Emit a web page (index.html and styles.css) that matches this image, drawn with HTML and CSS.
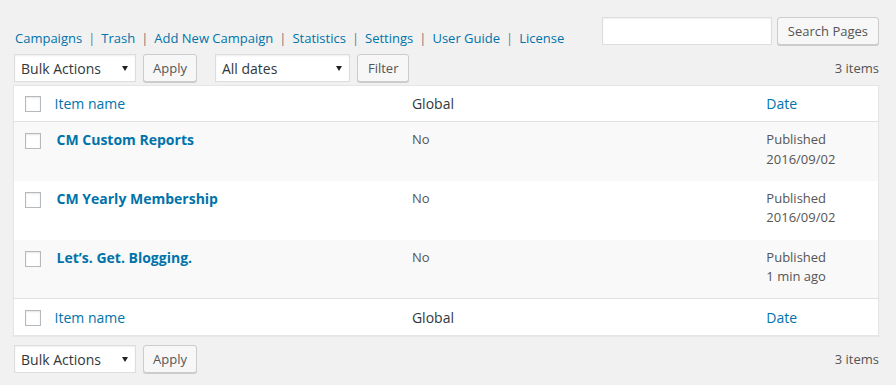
FILE: index.html
```html
<!DOCTYPE html>
<html lang="en">
<head>
    <meta charset="UTF-8">
    <title>Campaigns</title>
    <meta name="viewport" content="width=device-width, initial-scale=1.0">
    <link rel="stylesheet" href="styles.css">
</head>
<body>
<div class="wrap">
    <!-- Sub navigation + search -->
    <div class="top-bar">
        <ul class="subnav">
            <li><a href="#">Campaigns</a><span class="sep">|</span></li>
            <li><a href="#">Trash</a><span class="sep">|</span></li>
            <li><a href="#">Add New Campaign</a><span class="sep">|</span></li>
            <li><a href="#">Statistics</a><span class="sep">|</span></li>
            <li><a href="#">Settings</a><span class="sep">|</span></li>
            <li><a href="#">User Guide</a><span class="sep">|</span></li>
            <li><a href="#">License</a></li>
        </ul>
        <form class="search-box">
            <input type="search" class="search-input">
            <button type="button" class="button button-search">Search Pages</button>
        </form>
    </div>

    <!-- Top table navigation -->
    <div class="tablenav">
        <div class="actions">
            <span class="select-wrap select-bulk">
                <select class="select"><option>Bulk Actions</option></select>
            </span>
            <button type="button" class="button">Apply</button>
        </div>
        <div class="actions">
            <span class="select-wrap select-dates">
                <select class="select"><option>All dates</option></select>
            </span>
            <button type="button" class="button button-filter">Filter</button>
        </div>
        <div class="count">3 items</div>
    </div>

    <table class="list-table">
        <colgroup>
            <col class="col-check">
            <col class="col-name">
            <col class="col-global">
            <col class="col-date">
        </colgroup>
        <thead>
            <tr>
                <th class="check-column"><input type="checkbox" class="cb"></th>
                <th><a href="#">Item name</a></th>
                <th>Global</th>
                <th><a href="#">Date</a></th>
            </tr>
        </thead>
        <tbody>
            <tr class="alt">
                <td class="check-column"><input type="checkbox" class="cb"></td>
                <td><a href="#" class="row-title">CM Custom Reports</a></td>
                <td>No</td>
                <td>Published<br>2016/09/02</td>
            </tr>
            <tr>
                <td class="check-column"><input type="checkbox" class="cb"></td>
                <td><a href="#" class="row-title">CM Yearly Membership</a></td>
                <td>No</td>
                <td>Published<br>2016/09/02</td>
            </tr>
            <tr class="alt">
                <td class="check-column"><input type="checkbox" class="cb"></td>
                <td><a href="#" class="row-title">Let’s. Get. Blogging.</a></td>
                <td>No</td>
                <td>Published<br><abbr title="2016/09/02">1 min ago</abbr></td>
            </tr>
        </tbody>
        <tfoot>
            <tr>
                <th class="check-column"><input type="checkbox" class="cb"></th>
                <th><a href="#">Item name</a></th>
                <th>Global</th>
                <th><a href="#">Date</a></th>
            </tr>
        </tfoot>
    </table>

    <!-- Bottom table navigation -->
    <div class="tablenav bottom">
        <div class="actions">
            <span class="select-wrap select-bulk">
                <select class="select"><option>Bulk Actions</option></select>
            </span>
            <button type="button" class="button">Apply</button>
        </div>
        <div class="count">3 items</div>
    </div>
</div>
</body>
</html>
```

FILE: styles.css
```css
/* Page base */
html, body {
    margin: 0;
    padding: 0;
}

body {
    background: #f1f1f1;
    color: #444;
    font-family: "Open Sans", "Liberation Sans", sans-serif;
    font-size: 13px;
    line-height: 1.4em;
}

a {
    color: #0073aa;
    text-decoration: none;
}

.wrap {
    padding: 17px 17px 0 13px;
}

/* Sub navigation + search */
.top-bar {
    display: flex;
    justify-content: space-between;
    align-items: flex-start;
    height: 28px;
}

.subnav {
    list-style: none;
    margin: 11px 0 0 2px;
    padding: 0;
    display: flex;
    line-height: 20px;
}

.subnav .sep {
    color: #777;
    margin: 0 6px 0 6px;
}

.search-box {
    display: flex;
    gap: 5px;
    margin: 0;
}

.search-input {
    box-sizing: border-box;
    width: 170px;
    height: 28px;
    margin: 0;
    border: 1px solid #ddd;
    background: #fff;
    box-shadow: inset 0 1px 2px rgba(0, 0, 0, 0.07);
    outline: none;
}

/* Buttons */
.button {
    box-sizing: border-box;
    height: 28px;
    margin: 0;
    padding: 0 9px 1px;
    font-family: inherit;
    font-size: 13px;
    line-height: 26px;
    color: #555;
    background: #f7f7f7;
    border: 1px solid #ccc;
    border-radius: 3px;
    box-shadow: 0 1px 0 #ccc;
    cursor: pointer;
}

.button-search {
    padding: 0 10px 1px;
}

.button-filter {
    padding: 0 10px 1px;
}

/* Table navigation */
.tablenav {
    display: flex;
    align-items: flex-start;
    height: 31px;
    margin-top: 9px;
}

.tablenav.bottom {
    margin-top: 9px;
}

.actions {
    display: flex;
    gap: 7px;
    margin: 0 18px 0 1px;
}

.actions + .actions {
    margin-left: 0;
}

.count {
    margin-left: auto;
    line-height: 28px;
    color: #555;
}

/* Selects with a drawn arrow */
.select-wrap {
    position: relative;
    display: block;
}

.select-wrap::after {
    content: "";
    position: absolute;
    top: 12px;
    right: 8px;
    border-left: 3.5px solid transparent;
    border-right: 3.5px solid transparent;
    border-top: 5px solid #222;
    pointer-events: none;
}

.select {
    -webkit-appearance: none;
    appearance: none;
    box-sizing: border-box;
    height: 28px;
    margin: 0;
    padding: 0 20px 0 6px;
    font-family: inherit;
    font-size: 14px;
    color: #32373c;
    background: #fff;
    border: 1px solid #ddd;
    border-radius: 0;
    box-shadow: inset 0 1px 2px rgba(0, 0, 0, 0.07);
    outline: none;
}

.select-bulk .select {
    width: 122px;
}

.select-dates .select {
    width: 135px;
}

/* List table */
.list-table {
    width: 100%;
    table-layout: fixed;
    border-collapse: collapse;
    background: #fff;
    border: 1px solid #e5e5e5;
    box-shadow: 0 1px 1px rgba(0, 0, 0, 0.04);
}

.col-check { width: 31px; }
.col-name { width: 357px; }
.col-global { width: 354px; }
.col-date { width: 122px; }

.list-table th {
    padding: 8px 10px;
    font-size: 14px;
    line-height: 19px;
    font-weight: 400;
    text-align: left;
    color: #32373c;
}

.list-table thead th {
    border-bottom: 1px solid #e1e1e1;
}

.list-table tfoot th {
    padding-top: 9px;
    border-top: 1px solid #e1e1e1;
}

.list-table td {
    box-sizing: border-box;
    height: 59px;
    padding: 8px 10px;
    vertical-align: top;
    line-height: 19.5px;
    color: #555;
}

.list-table tr.alt td {
    background: #f9f9f9;
}

.list-table abbr {
    text-decoration: none;
}

.row-title {
    margin-left: 2px;
    font-size: 14px;
    font-weight: 700;
}

/* Checkbox column */
.list-table .check-column {
    padding: 10px 0 0 11px;
    vertical-align: top;
}

.list-table td.check-column,
.list-table tfoot .check-column {
    padding-top: 11px;
}

.cb {
    -webkit-appearance: none;
    appearance: none;
    display: block;
    box-sizing: border-box;
    width: 16px;
    height: 16px;
    margin: 0;
    background: #fff;
    border: 1px solid #b4b9be;
    box-shadow: inset 0 1px 2px rgba(0, 0, 0, 0.1);
}
```
